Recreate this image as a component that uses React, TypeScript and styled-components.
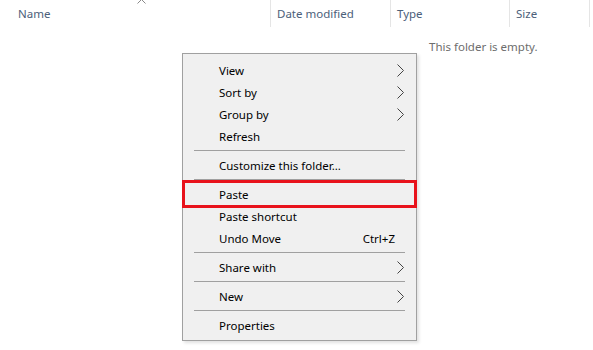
import styled, { createGlobalStyle } from 'styled-components';

const GlobalStyle = createGlobalStyle`
  html, body {
    margin: 0;
    padding: 0;
    background: #ffffff;
    font-family: "Segoe UI", "Noto Sans", "Open Sans", sans-serif;
  }
`;

type MenuEntry =
  | { kind: 'item'; label: string; sub?: boolean; shortcut?: string; marked?: boolean }
  | { kind: 'sep' };

const entries: MenuEntry[] = [
  { kind: 'item', label: 'View', sub: true },
  { kind: 'item', label: 'Sort by', sub: true },
  { kind: 'item', label: 'Group by', sub: true },
  { kind: 'item', label: 'Refresh' },
  { kind: 'sep' },
  { kind: 'item', label: 'Customize this folder...' },
  { kind: 'sep' },
  { kind: 'item', label: 'Paste', marked: true },
  { kind: 'item', label: 'Paste shortcut' },
  { kind: 'item', label: 'Undo Move', shortcut: 'Ctrl+Z' },
  { kind: 'sep' },
  { kind: 'item', label: 'Share with', sub: true },
  { kind: 'sep' },
  { kind: 'item', label: 'New', sub: true },
  { kind: 'sep' },
  { kind: 'item', label: 'Properties' },
];

const columns = [
  { label: 'Name', width: 271, caret: true },
  { label: 'Date modified', width: 120 },
  { label: 'Type', width: 119 },
  { label: 'Size', width: 80 },
];

export default function App() {
  return (
    <Page>
      <GlobalStyle />
      <Header>
        {columns.map((c) => (
          <Column key={c.label} $width={c.width}>
            {c.caret && (
              <Caret width="9" height="5" viewBox="0 0 9 5">
                <path d="M0.5 4.5 L4.5 0.5 L8.5 4.5" fill="none" stroke="#8a8a8a" strokeWidth="1" />
              </Caret>
            )}
            {c.label}
          </Column>
        ))}
      </Header>
      <Body>
        <EmptyText>This folder is empty.</EmptyText>
        <Menu>
          {entries.map((e, i) =>
            e.kind === 'sep' ? (
              <Separator key={i} />
            ) : (
              <Item key={i} $marked={e.marked}>
                <Label>{e.label}</Label>
                {e.shortcut && <Shortcut>{e.shortcut}</Shortcut>}
                {e.sub && (
                  <Arrow width="7" height="13" viewBox="0 0 7 13">
                    <path d="M0.5 0.5 L6.5 6.5 L0.5 12.5" fill="none" stroke="#444" strokeWidth="1" />
                  </Arrow>
                )}
              </Item>
            )
          )}
        </Menu>
      </Body>
    </Page>
  );
}

const Page = styled.div`
  width: 593px;
  height: 350px;
  background: #fff;
  overflow: hidden;
`;

const Header = styled.div`
  display: flex;
  height: 27px;
`;

const Column = styled.div<{ $width: number }>`
  position: relative;
  width: ${(p) => p.$width}px;
  box-sizing: border-box;
  padding-left: 6px;
  border-right: 1px solid #e5e5e5;
  display: flex;
  align-items: center;
  font-size: 11.5px;
  color: #4c607a;

  &:first-child {
    padding-left: 18px;
  }
`;

const Caret = styled.svg`
  position: absolute;
  left: 137px;
  top: -1px;
`;

const Body = styled.div`
  position: relative;
  height: 323px;
`;

const EmptyText = styled.div`
  padding: 12px 0 0 429px;
  font-size: 11.5px;
  color: #6d6d6d;
`;

const Menu = styled.div`
  position: absolute;
  left: 182px;
  top: 26px;
  width: 235px;
  box-sizing: border-box;
  padding: 5px 2px 4px 2px;
  background: #f0f0f0;
  border: 1px solid #a0a0a0;
  box-shadow: 2px 2px 3px rgba(0, 0, 0, 0.12);
`;

const Item = styled.div<{ $marked?: boolean }>`
  height: 22px;
  display: flex;
  align-items: center;
  padding: 0 10px 0 34px;
  font-size: 11.5px;
  color: #000;
  outline: ${(p) => (p.$marked ? '3px solid #e8121b' : 'none')};
  position: relative;
`;

const Label = styled.span`
  flex: 1;
`;

const Shortcut = styled.span`
  padding-right: 9px;
`;

const Arrow = styled.svg`
  display: block;
`;

const Separator = styled.div`
  height: 1px;
  margin: 3px 9px 3px 9px;
  background: #a0a0a0;
`;
